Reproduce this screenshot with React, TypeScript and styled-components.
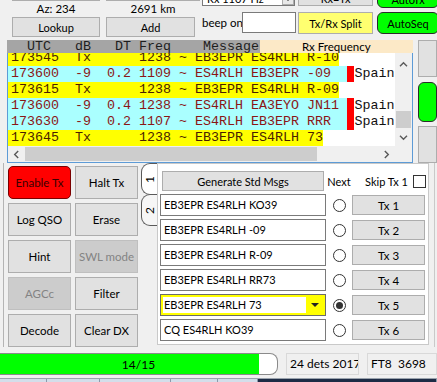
import React from 'react'
import styled, { createGlobalStyle, css } from 'styled-components'

const GlobalStyle = createGlobalStyle`
  html, body { margin: 0; padding: 0; background: #f0f0f0; }
  body {
    font-family: Lato, "Liberation Sans", Arial, sans-serif;
    font-size: 11px;
    color: #000;
  }
  * { box-sizing: border-box; }
`

const mono = css`
  font-family: "Liberation Mono", "Courier New", monospace;
  font-size: 13.333px;
  white-space: pre;
`

const Page = styled.div`
  width: 437px;
  height: 382px;
  overflow: hidden;
  display: flex;
  flex-direction: column;
  background: #f0f0f0;
`

// buttons

const variants = {
  normal: css`background: #e1e1e1; border-color: #adadad; color: #000;`,
  disabled: css`background: #cccccc; border-color: #bfbfbf; color: #838383;`,
  red: css`background: #ff0000; border-color: #7a0000; color: #3b0000; border-radius: 5px;`,
  green: css`background: #00ff00; border-color: #2b2b2b; border-radius: 6px;`,
  yellow: css`background: #ffff70; border-color: #adadad;`,
}

type Variant = keyof typeof variants

const Btn = styled.div<{ $v?: Variant; $h?: number; $mt?: number }>`
  display: flex;
  align-items: center;
  justify-content: center;
  border: 1px solid;
  white-space: nowrap;
  overflow: hidden;
  ${(p) => p.$h !== undefined && `height: ${p.$h}px; flex-shrink: 0;`}
  ${(p) => p.$mt !== undefined && `margin-top: ${p.$mt}px;`}
  ${(p) => variants[p.$v ?? 'normal']}
`

// top controls

const TopArea = styled.div`
  height: 40px;
  flex-shrink: 0;
  display: flex;
  padding-left: 12px;
`

const Column = styled.div<{ $w: number; $ml?: number }>`
  width: ${(p) => p.$w}px;
  margin-left: ${(p) => p.$ml ?? 0}px;
  flex-shrink: 0;
  display: flex;
  flex-direction: column;
`

const Pair = styled.div<{ $cols: string }>`
  display: grid;
  grid-template-columns: ${(p) => p.$cols};
  column-gap: 6px;
`

const DxFields = styled(Pair)`
  height: 16px;
  margin-top: -15px;
`

const Field = styled.div`
  background: #fff;
  border: 1px solid #adadad;
`

const InfoRow = styled(Pair)`
  height: 15px;
  line-height: 15px;
  text-align: center;
  font-size: 11.5px;
`

const LookupRow = styled(Pair)`
  height: 20px;
  margin-top: 1px;
`

const SpinBox = styled.div`
  height: 14px;
  margin-top: -8px;
  margin-right: 1px;
  display: flex;
  background: #fff;
  border: 1px solid #7a7a7a;
`

const SpinText = styled.div`
  flex: 1;
  padding-left: 4px;
  line-height: 12px;
`

const SpinArrow = styled.div`
  width: 12px;
  border: 1px solid #adadad;
  background: #e8e8e8;
  display: flex;
  align-items: flex-end;
  justify-content: center;
  padding-bottom: 3px;
`

const DownTriangle = styled.span<{ $size?: number }>`
  width: 0;
  height: 0;
  border-left: ${(p) => p.$size ?? 3}px solid transparent;
  border-right: ${(p) => p.$size ?? 3}px solid transparent;
  border-top: ${(p) => p.$size ?? 3}px solid #222;
`

const BeepRow = styled.div`
  display: flex;
  align-items: center;
  height: 21px;
  margin-top: 6px;
`

const BeepLabel = styled.span`
  width: 40px;
  flex-shrink: 0;
  white-space: nowrap;
  font-size: 11.5px;
`

const BeepInput = styled.div`
  width: 54px;
  height: 21px;
  background: #fff;
  border: 1px solid #7a7a7a;
`

// decode list

const ListRow = styled.div`
  height: 123px;
  flex-shrink: 0;
  display: flex;
`

const Decodes = styled.div`
  width: 416px;
  margin-left: 7px;
  display: flex;
  flex-direction: column;
`

const HeaderBar = styled.div`
  display: flex;
  height: 13px;
`

const ColumnHeads = styled.div`
  ${mono}
  width: 253px;
  background: #a5a5a5;
  color: #1e1e1e;
  line-height: 13px;
  padding-left: 4px;
  overflow: hidden;
`

const PaneTitle = styled.div`
  flex: 1;
  background: #fce9c7;
  text-align: center;
  line-height: 13px;
  font-size: 11.5px;
`

const ListBox = styled.div`
  flex: 1;
  display: grid;
  grid-template-columns: 1fr 17px;
  grid-template-rows: 1fr 16px;
  border: 1px solid #5d9bd6;
  border-top: none;
  background: #fff;
`

const Viewport = styled.div`
  overflow: hidden;
  background: #fff;
`

const Rows = styled.div`
  margin-top: -3px;
`

const DecodeLine = styled.div`
  ${mono}
  display: flex;
  height: 16px;
  line-height: 16px;
`

const LineText = styled.span<{ $tx: boolean }>`
  padding-left: 3px;
  background: ${(p) => (p.$tx ? '#ffff00' : '#aaffff')};
  color: ${(p) => (p.$tx ? '#4a1e00' : '#8a1616')};
`

const Flag = styled.span`
  width: 8px;
  background: #ff0000;
`

const Country = styled.span`
  padding-left: 1px;
  color: #111;
`

const VScroll = styled.div`
  background: #f0f0f0;
  display: flex;
  flex-direction: column;
`

const ScrollArrow = styled.div<{ $size: number }>`
  flex: 0 0 ${(p) => p.$size}px;
  display: flex;
  align-items: center;
  justify-content: center;
`

const VTrack = styled.div`
  flex: 1;
  display: flex;
  flex-direction: column;
  justify-content: flex-end;
  padding: 0 1px;
`

const VThumb = styled.div`
  height: 17px;
  background: #cdcdcd;
`

const HScroll = styled.div`
  background: #f0f0f0;
  display: flex;
`

const HThumb = styled.div`
  width: 292px;
  margin: 1px 0;
  background: #cdcdcd;
`

const Spacer = styled.div`
  flex: 1;
`

const Corner = styled.div`
  background: #f0f0f0;
`

const ChevronSvg = styled.svg<{ $rot: number }>`
  transform: rotate(${(p) => p.$rot}deg);
`

const Chevron = ({ dir }: { dir: 'up' | 'down' | 'left' | 'right' }) => {
  const rot = { up: 0, right: 90, down: 180, left: 270 }[dir]
  return (
    <ChevronSvg $rot={rot} width="9" height="9" viewBox="0 0 9 9">
      <polyline points="1,6.2 4.5,2.7 8,6.2" fill="none" stroke="#5a5a5a" strokeWidth="1.4" />
    </ChevronSvg>
  )
}

const SideStack = styled.div`
  width: 20px;
  margin-left: 5px;
  display: flex;
  flex-direction: column;
`

// lower controls

const ControlRow = styled.div`
  height: 184px;
  flex-shrink: 0;
  display: flex;
`

const LeftFrame = styled.div`
  width: 138px;
  margin-left: 3px;
  border-left: 1px solid #b4b4b4;
  padding: 3px 3px 0 4px;
`

const ButtonGrid = styled.div`
  display: grid;
  grid-template-columns: 63px 63px;
  grid-auto-rows: 33px;
  gap: 4px;
  font-size: 11.5px;
`

const TabStrip = styled.div`
  width: 16px;
  display: flex;
  flex-direction: column;
`

const Tab = styled.div<{ $active?: boolean }>`
  height: 32px;
  margin-top: ${(p) => (p.$active ? 0 : -1)}px;
  border: 1px solid #5a5a5a;
  border-right: none;
  border-radius: 9px 0 0 9px;
  background: ${(p) => (p.$active ? '#fff' : '#f6f6f6')};
  display: flex;
  align-items: center;
  justify-content: center;
`

const TabLabel = styled.span`
  transform: rotate(-90deg);
  font-size: 12px;
`

const TabPane = styled.div`
  width: 272px;
  height: 182px;
  border: 1px solid #c9c9c9;
  background: #fff;
  padding: 7px 0 0 2px;
  display: grid;
  grid-template-columns: 166px 26px 73px;
  grid-template-rows: 20px repeat(6, 22px);
  row-gap: 3px;
  align-content: start;
`

const GenButton = styled(Btn)`
  margin: 0 2px;
`

const CenterCell = styled.div`
  display: flex;
  align-items: center;
  justify-content: center;
  white-space: nowrap;
`

const SkipCell = styled.div`
  display: flex;
  align-items: center;
  justify-content: flex-end;
  gap: 5px;
  margin-right: -1px;
  white-space: nowrap;
`

const CheckBox = styled.span`
  width: 13px;
  height: 13px;
  border: 1px solid #333;
  background: #fff;
`

const MsgEdit = styled.div`
  border: 1px solid #7a7a7a;
  background: #fff;
  padding-left: 3px;
  line-height: 20px;
  white-space: nowrap;
`

const TxCombo = styled.div`
  border: 1px solid #6a6a6a;
  background: #ffff00;
  padding: 2px;
  display: flex;
`

const ComboField = styled.div`
  flex: 1;
  background: #fff;
  padding-left: 1px;
  line-height: 16px;
  white-space: nowrap;
`

const ComboArrow = styled.div`
  width: 17px;
  display: flex;
  align-items: center;
  justify-content: center;
`

const Radio = styled.span<{ $on?: boolean }>`
  width: 13px;
  height: 13px;
  border: 1px solid #333;
  border-radius: 50%;
  background: #fff;
  display: flex;
  align-items: center;
  justify-content: center;
  &::after {
    content: '';
    width: 7px;
    height: 7px;
    border-radius: 50%;
    background: ${(p) => (p.$on ? '#333' : 'transparent')};
  }
`

const TxButton = styled(Btn)`
  height: 20px;
  align-self: center;
  font-size: 11.5px;
`

const RightEdge = styled.div`
  flex: 1;
  margin-left: 5px;
  border-left: 1px solid #c9c9c9;
`

// status bar

const StatusBar = styled.div`
  height: 31px;
  flex-shrink: 0;
  display: flex;
  align-items: flex-start;
  padding-top: 6px;
  font-size: 12px;
`

const Progress = styled.div`
  width: 292px;
  height: 22px;
  display: grid;
  border: 1px solid #8a8a8a;
  border-left: none;
  border-radius: 0 8px 8px 0;
  background: #fff;
  overflow: hidden;
`

const ProgressFill = styled.div`
  grid-area: 1 / 1;
  background: #00ff00;
`

const ProgressText = styled.div`
  grid-area: 1 / 1;
  display: flex;
  align-items: center;
  justify-content: center;
`

const StatusCell = styled.div<{ $w: number }>`
  width: ${(p) => p.$w}px;
  height: 22px;
  margin-left: 8px;
  flex-shrink: 0;
  border: 1px solid #d9d9d9;
  padding-left: 3px;
  line-height: 20px;
  white-space: pre;
  overflow: hidden;
`

const BottomStrip = styled.div`
  height: 4px;
  flex-shrink: 0;
  display: flex;
  border-top: 1px solid #9aa3ad;
`

const StripSeg = styled.div<{ $w?: number; $dark?: boolean }>`
  ${(p) => (p.$w ? `width: ${p.$w}px;` : 'flex: 1;')}
  background: ${(p) => (p.$dark ? '#1d2b45' : '#d3deea')};
  border-right: 1px solid #8b9aab;
`

type Decode = { text: string; tx: boolean; country?: string }

const decodes: Decode[] = [
  { text: '173545  Tx      1238 ~ EB3EPR ES4RLH R-10', tx: true },
  { text: '173600  -9  0.2 1109 ~ ES4RLH EB3EPR -09', tx: false, country: 'Spain' },
  { text: '173615  Tx      1238 ~ EB3EPR ES4RLH R-09', tx: true },
  { text: '173600  -9  0.4 1238 ~ ES4RLH EA3EYO JN11', tx: false, country: 'Spain' },
  { text: '173630  -9  0.2 1107 ~ ES4RLH EB3EPR RRR', tx: false, country: 'Spain' },
  { text: '173645  Tx      1238 ~ EB3EPR ES4RLH 73', tx: true },
]

const leftButtons: { label: string; v?: Variant }[] = [
  { label: 'Enable Tx', v: 'red' },
  { label: 'Halt Tx' },
  { label: 'Log QSO' },
  { label: 'Erase' },
  { label: 'Hint' },
  { label: 'SWL mode', v: 'disabled' },
  { label: 'AGCc', v: 'disabled' },
  { label: 'Filter' },
  { label: 'Decode' },
  { label: 'Clear DX' },
]

const messages = [
  'EB3EPR ES4RLH KO39',
  'EB3EPR ES4RLH -09',
  'EB3EPR ES4RLH R-09',
  'EB3EPR ES4RLH RR73',
  'EB3EPR ES4RLH 73',
  'CQ ES4RLH KO39',
]

const NEXT = 4
const progress = 14 / 15

export default function App() {
  return (
    <Page>
      <GlobalStyle />
      <TopArea>
        <Column $w={189}>
          <DxFields $cols="88px 94px">
            <Field />
            <Field />
          </DxFields>
          <InfoRow $cols="88px 94px">
            <span>Az: 234</span>
            <span>2691 km</span>
          </InfoRow>
          <LookupRow $cols="88px 89px">
            <Btn>Lookup</Btn>
            <Btn>Add</Btn>
          </LookupRow>
        </Column>
        <Column $w={94} $ml={1}>
          <SpinBox>
            <SpinText>Rx 1107 Hz</SpinText>
            <SpinArrow>
              <DownTriangle />
            </SpinArrow>
          </SpinBox>
          <BeepRow>
            <BeepLabel>beep on</BeepLabel>
            <BeepInput />
          </BeepRow>
        </Column>
        <Column $w={75} $ml={2}>
          <Btn $h={16} $mt={-10}>Rx=Tx</Btn>
          <Btn $v="yellow" $h={22} $mt={6}>Tx/Rx Split</Btn>
        </Column>
        <Column $w={62} $ml={4}>
          <Btn $v="green" $h={18} $mt={-10}>AutoTx</Btn>
          <Btn $v="green" $h={22} $mt={4}>AutoSeq</Btn>
        </Column>
      </TopArea>

      <ListRow>
        <Decodes>
          <HeaderBar>
            <ColumnHeads>{'  UTC   dB   DT Freq    Message'}</ColumnHeads>
            <PaneTitle>Rx Frequency</PaneTitle>
          </HeaderBar>
          <ListBox>
            <Viewport>
              <Rows>
                {decodes.map((d, i) => (
                  <DecodeLine key={i}>
                    <LineText $tx={d.tx}>{d.country ? d.text.padEnd(42) : d.text}</LineText>
                    {d.country && (
                      <>
                        <Flag />
                        <Country>{d.country}</Country>
                      </>
                    )}
                  </DecodeLine>
                ))}
              </Rows>
            </Viewport>
            <VScroll>
              <ScrollArrow $size={22}>
                <Chevron dir="up" />
              </ScrollArrow>
              <VTrack>
                <VThumb />
              </VTrack>
              <ScrollArrow $size={18}>
                <Chevron dir="down" />
              </ScrollArrow>
            </VScroll>
            <HScroll>
              <ScrollArrow $size={17}>
                <Chevron dir="left" />
              </ScrollArrow>
              <HThumb />
              <Spacer />
              <ScrollArrow $size={17}>
                <Chevron dir="right" />
              </ScrollArrow>
            </HScroll>
            <Corner />
          </ListBox>
        </Decodes>
        <SideStack>
          <Btn $h={37} />
          <Btn $v="green" $h={40} $mt={5} />
          <Btn $h={37} $mt={4} />
        </SideStack>
      </ListRow>

      <ControlRow>
        <LeftFrame>
          <ButtonGrid>
            {leftButtons.map((b) => (
              <Btn key={b.label} $v={b.v}>
                {b.label}
              </Btn>
            ))}
          </ButtonGrid>
        </LeftFrame>
        <TabStrip>
          <Tab $active>
            <TabLabel>1</TabLabel>
          </Tab>
          <Tab>
            <TabLabel>2</TabLabel>
          </Tab>
        </TabStrip>
        <TabPane>
          <GenButton>Generate Std Msgs</GenButton>
          <CenterCell>Next</CenterCell>
          <SkipCell>
            Skip Tx 1
            <CheckBox />
          </SkipCell>
          {messages.map((m, i) => (
            <React.Fragment key={i}>
              {i === NEXT ? (
                <TxCombo>
                  <ComboField>{m}</ComboField>
                  <ComboArrow>
                    <DownTriangle $size={4} />
                  </ComboArrow>
                </TxCombo>
              ) : (
                <MsgEdit>{m}</MsgEdit>
              )}
              <CenterCell>
                <Radio $on={i === NEXT} />
              </CenterCell>
              <TxButton>Tx {i + 1}</TxButton>
            </React.Fragment>
          ))}
        </TabPane>
        <RightEdge />
      </ControlRow>

      <StatusBar>
        <Progress>
          <ProgressFill style={{ width: `${progress * 100}%` }} />
          <ProgressText>14/15</ProgressText>
        </Progress>
        <StatusCell $w={73}>24 dets 2017</StatusCell>
        <StatusCell $w={70}>FT8  3698</StatusCell>
      </StatusBar>
      <BottomStrip>
        <StripSeg $w={47} />
        <StripSeg $w={53} />
        <StripSeg $w={71} />
        <StripSeg $w={47} />
        <StripSeg $w={40} />
        <StripSeg $dark />
      </BottomStrip>
    </Page>
  )
}
